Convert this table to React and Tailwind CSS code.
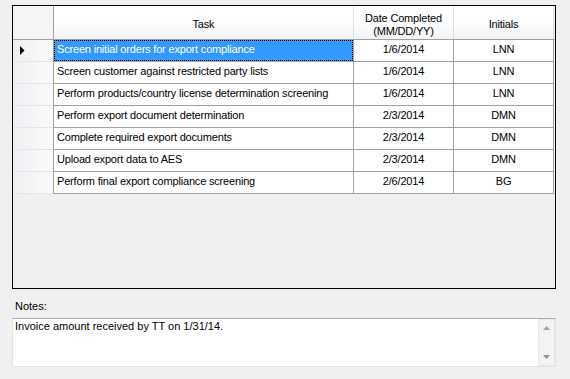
import React from 'react';

const rows = [
  { task: 'Screen initial orders for export compliance', date: '1/6/2014', initials: 'LNN' },
  { task: 'Screen customer against restricted party lists', date: '1/6/2014', initials: 'LNN' },
  { task: 'Perform products/country license determination screening', date: '1/6/2014', initials: 'LNN' },
  { task: 'Perform export document determination', date: '2/3/2014', initials: 'DMN' },
  { task: 'Complete required export documents', date: '2/3/2014', initials: 'DMN' },
  { task: 'Upload export data to AES', date: '2/3/2014', initials: 'DMN' },
  { task: 'Perform final export compliance screening', date: '2/6/2014', initials: 'BG' },
];

const RowArrow = () => (
  <svg width="5" height="9" viewBox="0 0 5 9" className="ml-[7px]">
    <polygon points="0,0 4.5,4.5 0,9" fill="#000" />
  </svg>
);

const App = () => {
  return (
    <div className="w-[570px] h-[379px] bg-[#f0f0f0] pt-[5px] pl-[12px] font-['Liberation_Sans',Arial,sans-serif] text-[11px] leading-[13px] text-black overflow-hidden">
      {/* grid */}
      <div className="w-[544px] h-[284px] border border-black bg-[#f0f0f0] tracking-[-0.18px]">
        {/* header */}
        <div className="flex h-[34px] border-b border-[#a0a0a0]">
          <div className="w-[41px] h-full bg-[#f4f5f7] border-r border-[#a0a0a0]" />
          <div className="w-[300px] h-full pt-[4px] flex items-center justify-center bg-gradient-to-b from-white via-white to-[#f1f2f4] border-r border-[#dcdde1]">
            Task
          </div>
          <div className="w-[100px] h-full pt-[4px] flex items-center justify-center text-center bg-gradient-to-b from-white via-white to-[#f1f2f4] border-r border-[#dcdde1]">
            Date Completed<br />(MM/DD/YY)
          </div>
          <div className="w-[100px] h-full pt-[4px] flex items-center justify-center bg-gradient-to-b from-white via-white to-[#f1f2f4] border-r border-[#dcdde1]">
            Initials
          </div>
        </div>

        {/* rows */}
        {rows.map((r, i) => (
          <div key={i} className="flex h-[22px]">
            <div className="w-[41px] h-full flex items-center border-r border-[#a0a0a0]">
              <div className="w-[40px] h-full flex items-center bg-gradient-to-r from-[#eef0f2] to-[#fbfbfc] border-b border-[#e4e5e8]">
                {i === 0 && <RowArrow />}
              </div>
            </div>
            <div className="w-[300px] h-full border-r border-b border-[#a0a0a0] bg-white">
              <div
                className={
                  i === 0
                    ? 'h-full pl-[3px] pb-[3px] flex items-center bg-[#3399ff] text-white outline-1 outline-dotted outline-black -outline-offset-1'
                    : 'h-full pl-[3px] pb-[3px] flex items-center'
                }
              >
                {r.task}
              </div>
            </div>
            <div className="w-[100px] h-full pb-[3px] flex items-center justify-center border-r border-b border-[#a0a0a0] bg-white">
              {r.date}
            </div>
            <div className="w-[100px] h-full pb-[3px] flex items-center justify-center border-r border-b border-[#a0a0a0] bg-white">
              {r.initials}
            </div>
          </div>
        ))}
      </div>

      {/* notes */}
      <div className="mt-[11px] ml-[3px]">Notes:</div>
      <div className="mt-[5px] w-[544px] h-[49px] flex bg-white border border-[#e2e3ea] border-t-[#abadb3]">
        <div className="flex-1 pl-[2px] pt-[1px]">Invoice amount received by TT on 1/31/14.</div>
        <div className="w-[17px] h-full flex flex-col items-center justify-between py-[6px] bg-[#f3f3f3] border border-[#e8e8ea]">
          <svg width="7" height="4" viewBox="0 0 7 4">
            <polygon points="0,4 3.5,0 7,4" fill="#a3a3a3" />
          </svg>
          <svg width="7" height="4" viewBox="0 0 7 4">
            <polygon points="0,0 7,0 3.5,4" fill="#8f8f8f" />
          </svg>
        </div>
      </div>
    </div>
  );
};

export default App;
